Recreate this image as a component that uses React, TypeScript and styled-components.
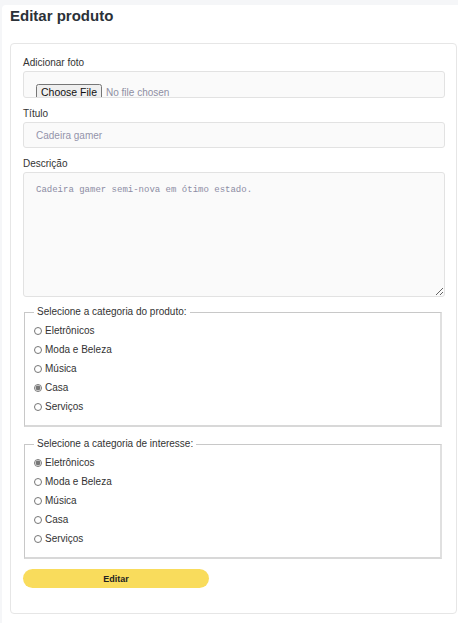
import React from "react";
import styled, { createGlobalStyle } from "styled-components";

const Global = createGlobalStyle`
  html, body { margin: 0; padding: 0; }
  body {
    background: #f5f6f8;
    font-family: "Liberation Sans", Arial, sans-serif;
    color: #333;
  }
`;

const Page = styled.main`
  background: #ffffff;
  margin: 5px 0 0 2px;
  padding: 0 1px 10px 8px;
  border-top-left-radius: 4px;
  min-height: 618px;
  box-sizing: border-box;
`;

const Heading = styled.h1`
  margin: 0;
  padding: 2px 0 18px;
  font-size: 15px;
  line-height: 18px;
  font-weight: 700;
  color: #2b3138;
`;

const Card = styled.form`
  border: 1px solid #e6e6e6;
  border-radius: 4px;
  padding: 13px 11px 25px 12px;
  display: flex;
  flex-direction: column;
`;

const Field = styled.div<{ $after?: number }>`
  display: flex;
  flex-direction: column;
  gap: 2px;
  margin-bottom: ${(p) => p.$after ?? 10}px;
`;

const Label = styled.label`
  font-size: 10px;
  line-height: 12px;
  color: #333;
`;

const baseBox = `
  box-sizing: border-box;
  width: 100%;
  background: #fafafa;
  border: 1px solid #e2e2e2;
  border-radius: 3px;
  color: #9494aa;
  font-family: "Liberation Sans", Arial, sans-serif;
  font-size: 10px;
  outline: none;
`;

const FileInput = styled.input`
  ${baseBox}
  height: 27px;
  padding: 12px 12px 0;
  overflow: hidden;
  color: #8f8fa3;
  &::file-selector-button {
    font-family: "Liberation Sans", Arial, sans-serif;
    font-size: 10.5px;
    color: #111;
    padding: 0 3px;
    margin-right: 4px;
  }
`;

const TextInput = styled.input`
  ${baseBox}
  height: 26px;
  padding: 0 12px;
`;

const TextArea = styled.textarea`
  ${baseBox}
  height: 125px;
  padding: 12px;
  font-family: "Liberation Mono", "Courier New", monospace;
  font-size: 9px;
  line-height: 11px;
  color: #8c8ca4;
  resize: vertical;
`;

const Group = styled.fieldset`
  margin: 0 3px 10px 1px;
  padding: 2px 9px 9px 9px;
  border-width: 1px 2px 2px 1px;
  border-color: #c8c8c8 #e0e0e0 #d8d8d8 #c8c8c8;
  border-style: solid;
`;

const Legend = styled.legend`
  font-size: 10px;
  line-height: 14px;
  padding: 0 3px;
  color: #333;
`;

const Option = styled.label`
  display: flex;
  align-items: center;
  height: 19px;
  font-size: 10px;
  color: #333;
`;

const Radio = styled.input`
  width: 8px;
  height: 8px;
  margin: 0 3px 0 0;
  accent-color: #777;
`;

const SubmitButton = styled.button`
  align-self: flex-start;
  width: 186px;
  height: 19px;
  border: none;
  border-radius: 10px;
  background: #f9dc5c;
  color: #222;
  font-family: "Liberation Sans", Arial, sans-serif;
  font-size: 9px;
  font-weight: 700;
  cursor: pointer;
`;

const categories = ["Eletrônicos", "Moda e Beleza", "Música", "Casa", "Serviços"];

function RadioGroup({ title, name, selected }: { title: string; name: string; selected: string }) {
  return (
    <Group>
      <Legend>{title}</Legend>
      {categories.map((c) => (
        <Option key={c}>
          <Radio type="radio" name={name} defaultChecked={c === selected} />
          {c}
        </Option>
      ))}
    </Group>
  );
}

export default function App() {
  return (
    <>
      <Global />
      <Page>
        <Heading>Editar produto</Heading>
        <Card onSubmit={(e) => e.preventDefault()}>
          <Field>
            <Label>Adicionar foto</Label>
            <FileInput type="file" />
          </Field>
          <Field>
            <Label>Título</Label>
            <TextInput type="text" defaultValue="Cadeira gamer" />
          </Field>
          <Field $after={8}>
            <Label>Descrição</Label>
            <TextArea defaultValue="Cadeira gamer semi-nova em ótimo estado." />
          </Field>
          <RadioGroup title="Selecione a categoria do produto:" name="produto" selected="Casa" />
          <RadioGroup title="Selecione a categoria de interesse:" name="interesse" selected="Eletrônicos" />
          <SubmitButton type="submit">Editar</SubmitButton>
        </Card>
      </Page>
    </>
  );
}
